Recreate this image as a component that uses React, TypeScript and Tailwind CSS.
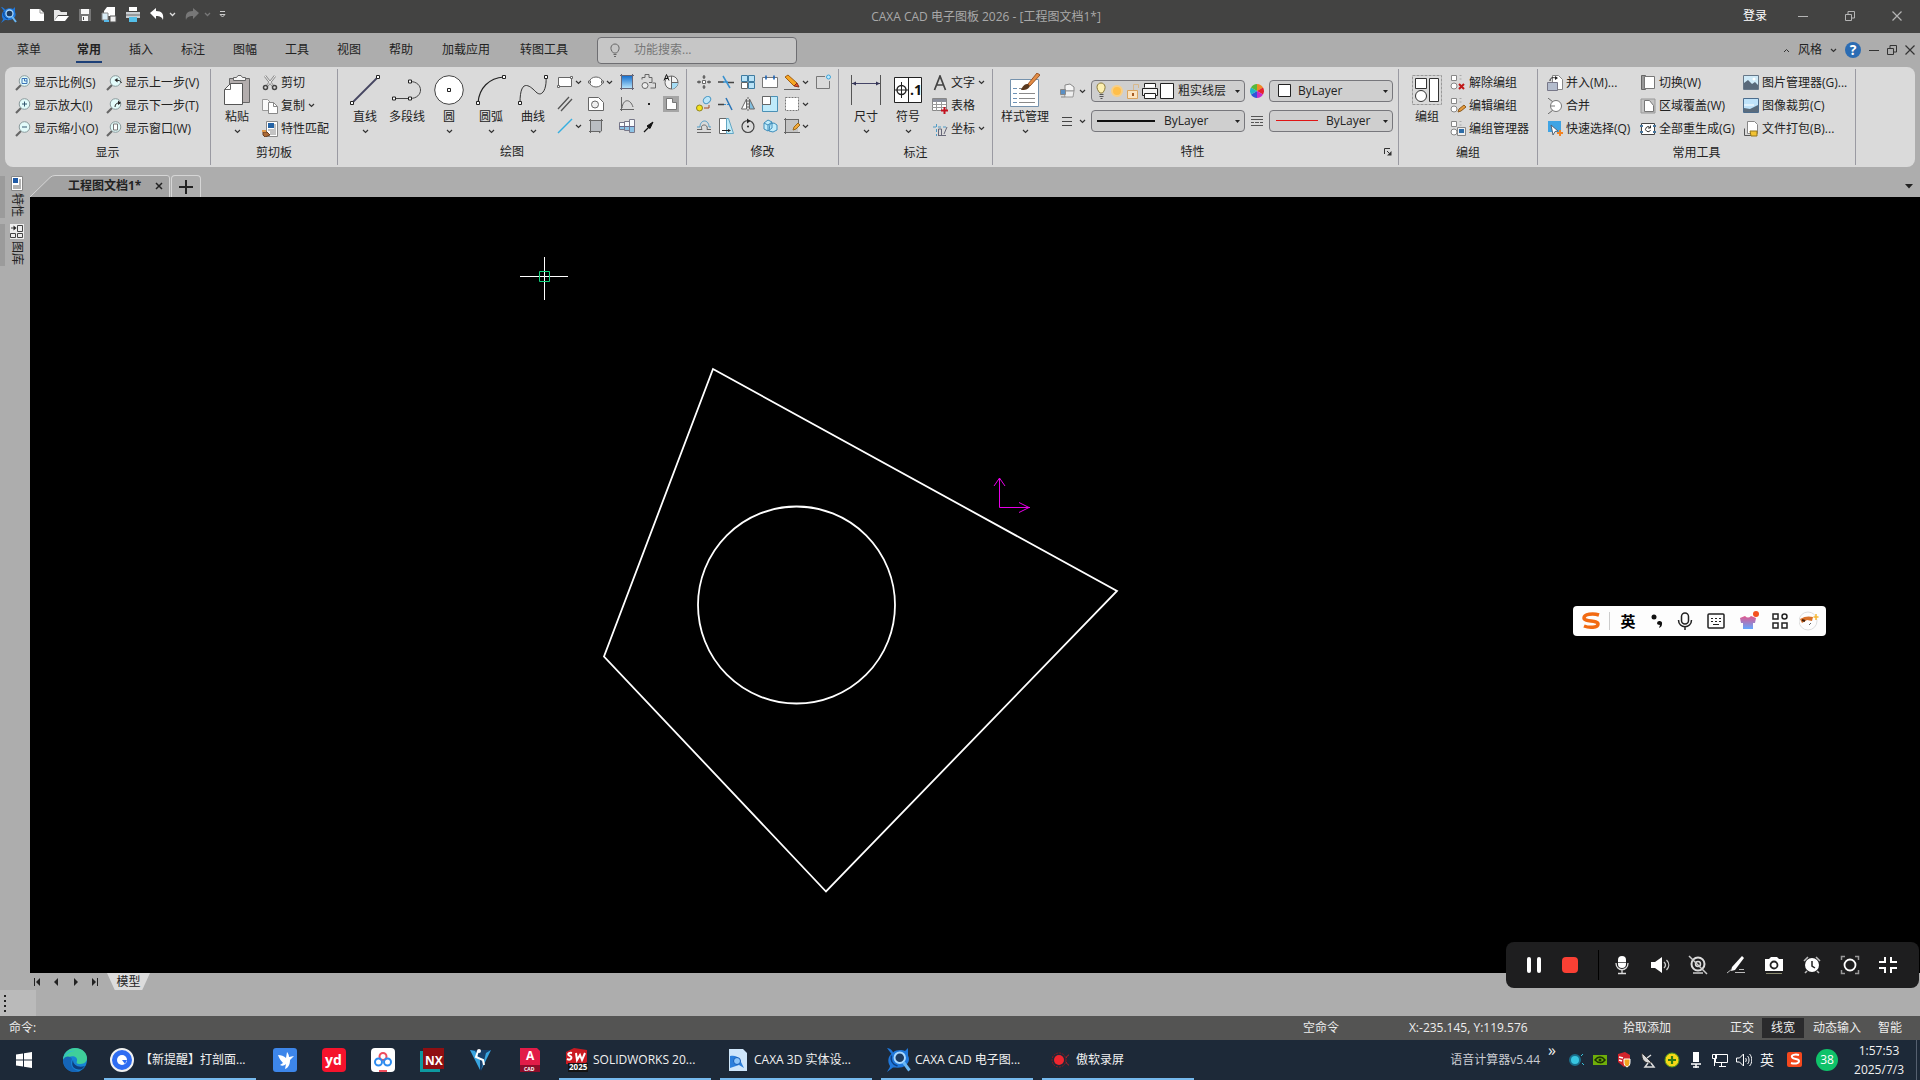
import { ReactNode } from 'react';
import clsx from 'clsx';

interface SvgProps {
  w?: number;
  h?: number;
  box?: string;
  children: ReactNode;
}

// Icons are drawn on a 16x16 grid unless told otherwise
function Svg({ w = 16, h = 16, box, children }: SvgProps) {
  return (
    <svg className="shrink-0" width={w} height={h} viewBox={box ?? `0 0 ${w} ${h}`} fill="none" stroke="#666" strokeWidth={1}>
      {children}
    </svg>
  );
}

const Chevron = () => (
  <Svg w={7} h={5}>
    <path d="M1 1l2.5 2.5L6 1" stroke="#333" strokeWidth={1.2} />
  </Svg>
);

const Caret = () => (
  <Svg w={5} h={3}>
    <path d="M0 0h5L2.5 3z" fill="#222" stroke="none" />
  </Svg>
);

/* ---------- display group ---------- */

function Magnifier({ children }: { children?: ReactNode }) {
  return (
    <Svg>
      <path d="M1 15l5-5" stroke="#666" strokeWidth={2.2} />
      <circle cx="9.5" cy="6" r="5.3" fill="#e2fbfa" stroke="#8a9a9c" />
      {children}
    </Svg>
  );
}

const zoomIcons = {
  scale: <Magnifier><path d="M7 3.5h5v5H7zM9.5 3.5v2.5H12" stroke="#3d74b8" /></Magnifier>,
  zoomIn: <Magnifier><path d="M7 6h5M9.5 3.5v5" stroke="#33566e" /></Magnifier>,
  zoomOut: <Magnifier><path d="M7 6h5" stroke="#33566e" /></Magnifier>,
  prev: <Magnifier><path d="M15.5 8c-1-2.5-3-3-5-2.5" stroke="#222" /><path d="M11.5 3v4.500L8.500 5z" fill="#222" stroke="none" /></Magnifier>,
  next: <Magnifier><path d="M9 9c0-3 2-4.500 5-4" stroke="#222" /><path d="M12 2.500v4.500l3-2z" fill="#222" stroke="none" /></Magnifier>,
  window: <Magnifier><path d="M7.5 3h4v6h-4z" fill="#fff" stroke="#777" /></Magnifier>,
};

/* ---------- clipboard group ---------- */

const PasteIcon = () => (
  <Svg w={30} h={30}>
    <path d="M7.5 3.5h20v24h-20z" fill="#b3adad" stroke="#666" />
    <path d="M11.5 5.5v-3h3L16 .5h3l1.500 2h3v3z" fill="#f5f5f5" />
    <path d="M8.5 8.5h12v21h-18v-15z" fill="#fff" stroke="#555" />
    <path d="M2.5 14.5h6v-6" />
  </Svg>
);

const CutIcon = () => (
  <Svg>
    <path d="M3 1l8 10M13 1L5 11" stroke="#888" strokeWidth={2.5} />
    <path d="M3 1l8 10M13 1L5 11" stroke="#f4f4f4" />
    <circle cx="3.5" cy="12.5" r="2" stroke="#444" strokeWidth={1.5} />
    <circle cx="12.5" cy="12.5" r="2" stroke="#444" strokeWidth={1.5} />
  </Svg>
);

const CopyIcon = () => (
  <Svg>
    <path d="M.5 1.5h5l3 3v8h-8z" fill="#fafafa" stroke="#999" />
    <path d="M6.5 4.5h5l4 4v7h-9z" fill="#fff" stroke="#888" />
    <path d="M11.5 4.5v4h4" stroke="#888" />
  </Svg>
);

const MatchIcon = () => (
  <Svg>
    <path d="M4.5.5h11v15h-11z" fill="#fff" stroke="#888" />
    <path d="M6 2h6v5H6z" fill="#2463a5" stroke="none" />
    <path d="M13 3v9M6 9h6M8 11h4M8 13h6" stroke="#888" />
    <path d="M1 11h4l3 3-5 2-2-2z" fill="#ab6a37" stroke="#6b3d1c" />
    <path d="M0 10h4" stroke="#e29a4a" strokeWidth={2} />
  </Svg>
);

/* ---------- draw group ---------- */

const Node = ({ x, y }: { x: number; y: number }) => (
  <path d={`M${x - 1.5} ${y - 1.5}h3v3h-3z`} fill="#fff" stroke="#222" />
);

// smaller grip used on the 16px icons
const Grip = ({ x, y }: { x: number; y: number }) => (
  <path d={`M${x - 1} ${y - 1}h2v2h-2z`} fill="#fff" stroke="#666" />
);

const drawBig = {
  line: <Svg w={30} h={30}><path d="M2 28L28 2" stroke="#454560" strokeWidth={1.8} /><Node x={2} y={28} /><Node x={28} y={2} /></Svg>,
  poly: <Svg w={30} h={30}><path d="M2 23.5h17M18 6.5c14 0 14 17 0 17" stroke="#444" /><Node x={2} y={23.5} /><Node x={18} y={23.5} /><Node x={18} y={6.5} /></Svg>,
  circle: <Svg w={30} h={30}><circle cx="15" cy="15" r="14.3" fill="#fff" stroke="#444" /><Node x={15} y={15} /></Svg>,
  arc: <Svg w={30} h={30}><path d="M2 28C3 13 13 3 28 2" stroke="#222" strokeWidth={1.2} /><Node x={2} y={28} /><Node x={28} y={2} /></Svg>,
  curve: <Svg w={30} h={30}><path d="M2 28C2 0 14 13 18 17C24 23 29 14 28 2" stroke="#333" /><Node x={2} y={28} /><Node x={28} y={2} /></Svg>,
};

interface Tool {
  name: string;
  menu?: boolean;
  icon?: ReactNode;
}

const drawTools: Tool[] = [
  { name: '矩形', menu: true, icon: <Svg><path d="M1.5 3.5h13v9h-13z" fill="#fff" /><Grip x={1.5} y={12.5} /><Grip x={14.5} y={3.5} /></Svg> },
  { name: '椭圆', menu: true, icon: <Svg><ellipse cx="8" cy="8" rx="6.5" ry="5" fill="#fff" /><Grip x={1.5} y={8} /><Grip x={14.5} y={8} /></Svg> },
  {
    name: '填充',
    icon: (
      <Svg>
        <defs>
          <linearGradient id="fill" x1="0" y1="0" x2="0" y2="1">
            <stop offset="0" stopColor="#1670ce" />
            <stop offset="1" stopColor="#b4e2fa" />
          </linearGradient>
        </defs>
        <path d="M3 2h10v12H3z" fill="url(#fill)" stroke="none" />
        <path d="M1 1.5h14M1 14.5h14M2.5 0v16M13.5 0v16" stroke="#667" />
      </Svg>
    ),
  },
  { name: '块', icon: <Svg><path d="M1 5.5V3.5h3v-3h4v3h3v5h-3M11.5 9h3v5h-5" /><circle cx="4" cy="11.5" r="3" fill="#eee" /></Svg> },
  { name: '放大图', icon: <Svg><circle cx="8.500" cy="8.5" r="6.5" fill="#f2f2f2" /><path d="M8.5 8.5H15a6.5 6.5 0 01-6.5 6.5z" fill="#a6ddf5" stroke="none" /><path d="M1 6.5L3.5.5 6 6.5M2 4.5h3" stroke="#111" /><path d="M8.5 2v13M8.500 8.5H15" /></Svg> },
  { name: '平行线', icon: <Svg><path d="M1 13L12 1M4 15L15 3" stroke="#555" strokeWidth={1.3} /></Svg> },
  { name: '孔', icon: <Svg><path d="M.5 1.5h10l5 5v8H.5z" fill="#fff" /><circle cx="7" cy="8.5" r="3.5" fill="#eee" /></Svg> },
  { name: '公式曲线', icon: <Svg><path d="M2.5 1v14M1 13.5h14M3 12C4 3 11 2 14 11" /></Svg> },
  { name: '点', icon: <Svg><path d="M7 7h2v2H7z" fill="#222" stroke="none" /></Svg> },
  { name: '轮廓', icon: <Svg><path d="M0 0h16v16H0z" fill="#a5a5a5" stroke="none" /><path d="M3.5 2.5h6v4h4v7h-10z" fill="#fff" stroke="#777" /></Svg> },
  { name: '构造线', menu: true, icon: <Svg><path d="M1 15L15 1" stroke="#35aee0" strokeWidth={1.5} /></Svg> },
  { name: '局部剖', icon: <Svg><path d="M3 3h10v10H3z" fill="#b9bdc2" stroke="none" /><path d="M1 2.5h14M2.5 1v14M13.5 1v12L11 15M1 13.5h11" /></Svg> },
  { name: '孔轴', icon: <Svg><path d="M.5 4.5h5v7h-5zM5.500 3.5h5v9h-5zM10.5 1.5h5v13h-5z" fill="#f8fafc" stroke="#778" /><path d="M1 9h4v2H1zM6 9h4v3H6zM11 9h4v5h-4z" fill="#8dc3e6" stroke="none" /><path d="M0 8.500h16" stroke="#668" /></Svg> },
  { name: '箭头', icon: <Svg><path d="M3 14l5-5" stroke="#111" strokeWidth={1.2} /><path d="M12 4L6 8l3 2.5z" fill="#111" stroke="#111" /></Svg> },
];

/* ---------- modify group ---------- */

const modifyTools: Tool[] = [
  { name: '平移', icon: <Svg><path d="M8 1v4M8 11v4M1 8h4M11 8h4" strokeWidth={1.4} /><path d="M6.5 3h3M6.5 13h3M3 6.500v3M13 6.5v3" stroke="#444" /><path d="M6.5 6.5h3v3h-3z" fill="#fff" /></Svg> },
  { name: '裁剪', icon: <Svg><path d="M0 8h6M10 8.5h6" stroke="#444" strokeWidth={1.4} /><path d="M5 2l7 12M5 8h5" stroke="#3b92cf" strokeWidth={1.5} /></Svg> },
  { name: '阵列', icon: <Svg><path d="M1.5 1.5h6v6h-6zM8.5 1.5h6v6h-6zM8.5 8.5h6v6h-6z" fill="#b9e2f6" stroke="#3f7ba0" /><path d="M1.5 8.5h6v6h-6z" fill="#fff" /></Svg> },
  { name: '打断', icon: <Svg><path d="M.5 3.5h15v10H.5z" fill="#fff" stroke="#777" /><path d="M4 1.500v4M12 1.5v4" stroke="#1d64b4" strokeWidth={1.600} /></Svg> },
  { name: '删除', menu: true, icon: <Svg><path d="M1 3l3-2 9 8-3 3z" fill="#f6a623" stroke="#a35e12" /><path d="M10 12l3-3 2 4z" fill="#e8552d" stroke="#8c3318" /><path d="M0 15.5h16" stroke="#666" /></Svg> },
  { name: '圆角', icon: <Svg><path d="M10 2.5H1.5v12h13V7" stroke="#777" /><circle cx="13.5" cy="3" r="2" fill="#bfeaff" stroke="#3fa3d8" /></Svg> },
  { name: '平移复制', icon: <Svg><ellipse cx="11" cy="4" rx="4" ry="3" fill="#bde6f8" stroke="#4f9bc6" transform="rotate(-40 11 4)" /><circle cx="3.5" cy="12" r="3" fill="#f5e21a" stroke="#8f8420" /><path d="M8 12h5V9" stroke="#a34a22" /></Svg> },
  { name: '延伸', icon: <Svg><path d="M0 8.5h6" stroke="#444" strokeWidth={1.4} /><path d="M6 8.5h6" stroke="#3b92cf" strokeDasharray="2 1" /><path d="M8 2l6 12" stroke="#2c75b6" strokeWidth={1.5} /></Svg> },
  { name: '镜像', icon: <Svg><path d="M6.5 3v10h-5z" fill="#fff" /><path d="M9.5 3v10h5z" fill="#82bfe0" /><path d="M8 1v14" strokeDasharray="2 1" /></Svg> },
  { name: '缩放', icon: <Svg><path d="M.5.5h15v15H.5z" fill="#bfeafa" stroke="#4b90b5" /><path d="M.5.5h8v8h-8z" fill="#fff" /></Svg> },
  { name: '分解', menu: true, icon: <Svg><path d="M1.5 1.5h13v13h-13z" fill="#fff" stroke="#777" strokeDasharray="2 1" /></Svg> },
  { name: '' },
  { name: '等距线', icon: <Svg><path d="M1 14.5h14M1 11.5h5c-3-6 7-6 5 0h4" /><path d="M1 9h3c0-8 9-8 9 0h2" stroke="#4f9bc6" /></Svg> },
  { name: '拉伸', icon: <Svg><path d="M1.5.5h7v15h-7z" fill="#fff" /><path d="M8.5.5h2l5 15h-7z" fill="#c2ecf8" stroke="#62a6c4" /><path d="M4 12.5h7" stroke="#222" /><path d="M10 11l3 1.500-3 1.5z" fill="#222" stroke="none" /></Svg> },
  { name: '旋转', icon: <Svg><circle cx="8" cy="8.500" r="6" stroke="#444" strokeWidth={1.2} /><path d="M7 .5l3.500 2.5L7 5.5z" fill="#222" stroke="none" /><circle cx="8" cy="8.5" r="1" fill="#222" stroke="none" /></Svg> },
  { name: '三维旋转', icon: <Svg><path d="M2 5l4-3 4 2v6l-4 3-4-2zM8 6l4-1 3 2v5l-4 2-4-1z" fill="#c2ecfb" stroke="#3f8ebb" /><path d="M2 5l4 2 4-3M6 7v6" stroke="#3f8ebb" /></Svg> },
  { name: '编辑', menu: true, icon: <Svg><path d="M2 2h12v12H2z" fill="#c4c4c4" stroke="none" /><path d="M0 1.5h14M1.5 0v16M0 14.5h16M14.5 1v5" /><path d="M9 12l1-3 4-4 2 2-4 4z" fill="#f2a93b" stroke="#9c6a18" /></Svg> },
];

/* ---------- annotate / properties ---------- */

const DimIcon = () => (
  <Svg w={30} h={30}>
    <path d="M.5 0v30M29.5 0v30" stroke="#555" />
    <path d="M1 8.5h28" stroke="#446" />
    <path d="M1 8.5l4-2v4zM29 8.5l-4-2v4z" fill="#335" stroke="none" />
  </Svg>
);

const SymbolIcon = () => (
  <Svg w={28} h={26}>
    <path d="M.5.5h27v25H.5z" fill="#fff" stroke="#222" />
    <path d="M14.5 0v26M1 13h13M7.5 5v16" stroke="#222" />
    <circle cx="7.5" cy="13" r="4.5" stroke="#222" strokeWidth={1.4} />
    <text x="16" y="18" fill="#111" stroke="none" className="text-sm font-bold">.1</text>
  </Svg>
);

const TextIcon = () => (
  <Svg>
    <path d="M2.5 15L8 1l5.5 14M4.5 10h7" stroke="#444" strokeWidth={1.7} />
  </Svg>
);

const TableIcon = () => (
  <Svg>
    <path d="M.5.5h14v12H.5z" fill="#fff" stroke="#888" />
    <path d="M1 1h13v3H1z" fill="#8b8f9c" stroke="none" />
    <path d="M0 6.5h14M0 9.5h14M4.5 3v10M9.5 3v10" stroke="#999" />
    <path d="M12.5 9v7M9 12.5h7" stroke="#c1121f" strokeWidth={2} />
  </Svg>
);

const CoordIcon = () => (
  <Svg>
    <path d="M1 6h14M4.5 3v12" stroke="#4f9bc6" strokeDasharray="3 2" />
    <path d="M6 14.5h8M6.5 14V8h3v6M12 13L15 6" stroke="#667" />
  </Svg>
);

const StyleIcon = () => (
  <Svg w={30} h={34}>
    <path d="M.5 6.5h28v27H.5z" fill="#fff" stroke="#7592ad" />
    <path d="M3 15.5h4M3 20.5h4M3 25.5h4M3 29.5h4" stroke="#6d91b5" />
    <path d="M9 15.5h5M9 20.5h16M9 25.5h16M9 29.5h16" stroke="#8a8a8a" />
    <path d="M11 17c2-5 4-6 7-6l2 2c-2 4-5 4-9 4z" fill="#5b3a20" stroke="none" />
    <path d="M18 11L27 0l3 2-10 11z" fill="#e38d45" stroke="#99562a" />
  </Svg>
);

const LayerIcon = () => (
  <Svg>
    <path d="M6 2l5-1 4 3v4H6z" fill="#f4f4f4" stroke="#888" />
    <path d="M5 8h10l-1 6H6z" fill="#eee" stroke="#999" />
    <path d="M1.5 6.5h5v5h-5z" fill="#5a8fc4" stroke="#888" />
    <path d="M2 14h4" stroke="#888" />
  </Svg>
);

const LinesIcon = () => (
  <Svg>
    <path d="M3 4.5h10M3 8.5h10M3 12.5h10" stroke="#444" />
  </Svg>
);

const WeightIcon = () => (
  <Svg w={14} h={14}>
    <path d="M1 2.5h12M1 5.5h12M1 8.5h3M5 8.5h4M10 8.5h3M1 11.5h12" stroke="#555" />
  </Svg>
);

const WheelIcon = () => (
  <Svg w={14} h={14}>
    <g stroke="none">
      <path d="M7 7V0a7 7 0 016 3.5z" fill="#f08a24" />
      <path d="M7 7l6-3.5a7 7 0 010 7z" fill="#e5232e" />
      <path d="M7 7l6 3.5A7 7 0 017 14z" fill="#c52bc9" />
      <path d="M7 7v7a7 7 0 01-6-3.5z" fill="#2f55d8" />
      <path d="M7 7l-6 3.5a7 7 0 010-7z" fill="#1fb6c9" />
      <path d="M7 7L1 3.5A7 7 0 017 0z" fill="#59b83a" />
    </g>
  </Svg>
);

const LayerStateIcons = () => (
  <Svg w={78} h={18}>
    <path d="M4 11C-1 6 1 1 5 1s6 5 1.5 10z" fill="#fdf0b0" stroke="#8b7b3a" />
    <path d="M3.5 12.5h4M3.5 14.5h4M4.5 16.5h2" stroke="#555" />
    <circle cx="21" cy="9" r="5" fill="#ffbf4a" stroke="#f8cf85" strokeWidth={2} />
    <path d="M31.5 8.5h10v8h-10z" fill="#fbe3bf" stroke="#d8a35e" />
    <path d="M37.5 8V2.5h5V6" stroke="#d8b98c" />
    <path d="M36 11h2v3h-2z" fill="#a55b23" stroke="none" />
    <path d="M48.5 5.5v-4h11v4" fill="#fff" stroke="#222" />
    <path d="M46.5 6.5h15v7h-15z" fill="#f4f4f4" stroke="#222" />
    <path d="M48.5 11.5h11v5h-11z" fill="#fff" stroke="#222" />
    <path d="M64.5 1.5h13v15h-13z" fill="#fff" stroke="#222" />
  </Svg>
);

/* ---------- group / common tools ---------- */

const GroupIcon = () => (
  <Svg w={30} h={30}>
    <path d="M.5.5h29v29H.5z" stroke="#999" strokeDasharray="3 1" />
    <path d="M3.5 3.5h11v10h-11zM17.5 3.5h9v23h-9z" fill="#fff" stroke="#333" />
    <circle cx="9" cy="21" r="5.5" fill="#fff" stroke="#333" />
  </Svg>
);

function GroupSmall({ children }: { children: ReactNode }) {
  return (
    <Svg>
      <path d="M1.5.5h5v5h-5z" fill="#fff" stroke="#888" />
      <circle cx="4" cy="11" r="3" fill="#fff" stroke="#888" />
      <path d="M9.5.5h2M9.5 4h2" stroke="#aaa" />
      {children}
    </Svg>
  );
}

const groupItems = [
  { name: '解除编组', icon: <GroupSmall><path d="M9 9l5 5M14 9l-5 5" stroke="#c01818" strokeWidth={2} /></GroupSmall> },
  { name: '编辑编组', icon: <GroupSmall><path d="M8 14l1-3 5-4 2 2-5 4z" fill="#e59a3c" stroke="#8d5a1d" /></GroupSmall> },
  { name: '编组管理器', icon: <GroupSmall><path d="M7.5 6.5h8v8h-8z" fill="#eee" stroke="#888" /><path d="M9 8h5v4H9z" fill="#2e6da8" stroke="none" /></GroupSmall> },
];

const commonItems = [
  { name: '并入(M)...', icon: <Svg><path d="M5.5.5h6l4 4v10h-10z" fill="#fff" stroke="#888" /><path d="M.5 7.5h10v8H.5z" fill="#b3bccd" stroke="#778" /><path d="M3 6c0-3 2-4 6-3" stroke="#222" /><path d="M8 1l3 2-3 2z" fill="#222" stroke="none" /></Svg> },
  { name: '切换(W)', icon: <Svg><path d="M1.5.5h4v14h-4z" fill="#999" stroke="#666" /><path d="M4.5 1.5h10v12h-10z" fill="#fff" stroke="#777" /></Svg> },
  { name: '图片管理器(G)...', icon: <Svg><path d="M.5.5h15v14H.5z" fill="#cfeaf8" stroke="#678" /><path d="M1 14V8l4-3 4 4 3-2 3 3v4z" fill="#59697a" stroke="none" /><circle cx="11" cy="4" r="1.5" fill="#fff" stroke="none" /></Svg> },
  { name: '合并', icon: <Svg><path d="M1 0l5 4M1 16l5-4" /><circle cx="9" cy="8" r="5.5" fill="#fff" stroke="#777" /><path d="M4 8h4" stroke="#777" /></Svg> },
  { name: '区域覆盖(W)', icon: <Svg><path d="M1 1h14v14H1z" fill="#c4c4c4" stroke="#999" /><path d="M4.5 2.5h5l4 5v6h-9z" fill="#fff" stroke="#777" /></Svg> },
  { name: '图像裁剪(C)', icon: <Svg><path d="M.5.5h15v14H.5z" fill="#bfe3fa" stroke="#4c6c8c" /><path d="M1 14v-4l6 1 8-4v7z" fill="#5a6b7c" stroke="none" /><path d="M1 7h10" stroke="#fff" /></Svg> },
  { name: '快速选择(Q)', icon: <Svg><path d="M1 0h13v11H1z" fill="#3fa4e4" stroke="none" /><path d="M4 4l7 6-3 .5L6 14z" fill="#fff" stroke="#567" /><path d="M13 9v6M10 12h6" stroke="#f28322" strokeWidth={2} /></Svg> },
  { name: '全部重生成(G)', icon: <Svg><path d="M1.5 2.5h13v11h-13z" fill="#fff" stroke="#444" /><path d="M0 5h3M0 11h3M13 5h3M13 11h3" stroke="#47759c" strokeWidth={2} /><path d="M10 6.500a2.500 2.500 0 10.5 2.500M10.5 4.500v2.500H8" stroke="#333" /></Svg> },
  { name: '文件打包(B)...', icon: <Svg><path d="M4.5.5h7l3 3v9h-10z" fill="#fff" stroke="#888" /><path d="M1.5 7.5v7h7" stroke="#555" /><path d="M7 10h7v5H8z" fill="#f1c232" stroke="#93751c" /></Svg> },
];

/* ---------- ribbon pieces ---------- */

function Group({ title, className, children }: { title: string; className?: string; children: ReactNode }) {
  return (
    <section className={clsx('my-0.5 flex shrink-0 flex-col border-r border-[#9a9aa2] pt-0.5', className)}>
      <div className="flex h-[69px]">{children}</div>
      <h2 className="text-center leading-[26px]">{title}</h2>
    </section>
  );
}

function BigButton({ icon, label, menu = true, wide }: { icon: ReactNode; label: string; menu?: boolean; wide?: boolean }) {
  return (
    <button className={clsx('flex flex-col items-center', wide ? 'w-[52px]' : 'w-[42px]')}>
      <span className="flex h-[38px] items-center">{icon}</span>
      <span className="leading-4 whitespace-nowrap">{label}</span>
      <span className="flex h-3 items-center">{menu && <Chevron />}</span>
    </button>
  );
}

function SmallButton({ icon, label, menu }: { icon: ReactNode; label: string; menu?: boolean }) {
  return (
    <button className="flex h-[23px] items-center gap-[3px] whitespace-nowrap">
      {icon}
      {label}
      {menu && <Chevron />}
    </button>
  );
}

function ToolGrid({ tools, className }: { tools: Tool[]; className: string }) {
  return (
    <div className={clsx('grid auto-rows-[22px]', className)}>
      {tools.map((tool, i) =>
        tool.icon ? (
          <button key={i} aria-label={tool.name} className="flex items-center gap-[2px]">
            {tool.icon}
            {tool.menu && <Chevron />}
          </button>
        ) : (
          <span key={i} />
        )
      )}
    </div>
  );
}

function Combo({ label, value, icon, className }: { label: string; value: string; icon: ReactNode; className: string }) {
  return (
    <div className={clsx('flex h-[22px] items-center gap-1 rounded border border-[#77777c] bg-[#cfcfcf] px-1', className)}>
      {icon}
      <select aria-label={label} className="min-w-0 flex-1 appearance-none bg-transparent outline-none">
        <option>{value}</option>
      </select>
      <Caret />
    </div>
  );
}

function Ribbon() {
  return (
    <div className="mx-[5px] flex h-[100px] overflow-hidden rounded-lg bg-[#dadada]">
      <Group title="显示" className="w-[206px]">
        <div className="grid grid-cols-[91px_auto] content-start pl-2.5">
          <SmallButton icon={zoomIcons.scale} label="显示比例(S)" />
          <SmallButton icon={zoomIcons.prev} label="显示上一步(V)" />
          <SmallButton icon={zoomIcons.zoomIn} label="显示放大(I)" />
          <SmallButton icon={zoomIcons.next} label="显示下一步(T)" />
          <SmallButton icon={zoomIcons.zoomOut} label="显示缩小(O)" />
          <SmallButton icon={zoomIcons.window} label="显示窗口(W)" />
        </div>
      </Group>

      <Group title="剪切板" className="w-[127px]">
        <div className="flex gap-1 pl-[5px]">
          <BigButton icon={<PasteIcon />} label="粘贴" />
          <div>
            <SmallButton icon={<CutIcon />} label="剪切" />
            <SmallButton icon={<CopyIcon />} label="复制" menu />
            <SmallButton icon={<MatchIcon />} label="特性匹配" />
          </div>
        </div>
      </Group>

      <Group title="绘图" className="w-[349px]">
        <div className="flex pl-1.5">
          <BigButton icon={drawBig.line} label="直线" />
          <BigButton icon={drawBig.poly} label="多段线" menu={false} />
          <BigButton icon={drawBig.circle} label="圆" />
          <BigButton icon={drawBig.arc} label="圆弧" />
          <BigButton icon={drawBig.curve} label="曲线" />
          <ToolGrid tools={drawTools} className="ml-[3px] grid-cols-[31px_31px_22px_22px_22px]" />
        </div>
      </Group>

      <Group title="修改" className="w-[152px]">
        <ToolGrid tools={modifyTools} className="ml-[9px] grid-cols-[22px_22px_22px_22px_31px_16px]" />
      </Group>

      <Group title="标注" className="w-[154px]">
        <div className="flex pl-1.5">
          <BigButton icon={<DimIcon />} label="尺寸" />
          <BigButton icon={<SymbolIcon />} label="符号" />
          <div className="ml-[3px]">
            <SmallButton icon={<TextIcon />} label="文字" menu />
            <SmallButton icon={<TableIcon />} label="表格" />
            <SmallButton icon={<CoordIcon />} label="坐标" menu />
          </div>
        </div>
      </Group>

      <section className="my-0.5 flex w-[406px] shrink-0 flex-col border-r border-[#9a9aa2] pt-0.5">
        <div className="flex h-[69px] pl-1.5">
          <BigButton icon={<StyleIcon />} label="样式管理" wide />
          <div className="ml-2 flex flex-col gap-2 pt-[9px]">
            <div className="flex items-center gap-[5px]">
              <button aria-label="图层" className="flex w-[27px] items-center gap-1"><LayerIcon /><Chevron /></button>
              <Combo label="当前层" value="粗实线层" icon={<LayerStateIcons />} className="w-[154px]" />
              <WheelIcon />
              <Combo label="颜色" value="ByLayer" icon={<Svg w={20} h={14}><path d="M4.5.5h12v12h-12z" fill="#fff" stroke="#222" /></Svg>} className="w-[124px]" />
            </div>
            <div className="flex items-center gap-[5px]">
              <button aria-label="线型" className="flex w-[27px] items-center gap-1"><LinesIcon /><Chevron /></button>
              <Combo label="线型" value="ByLayer" icon={<Svg w={64} h={2}><path d="M1 1h58" stroke="#111" strokeWidth={2} /></Svg>} className="w-[154px]" />
              <WeightIcon />
              <Combo label="线宽" value="ByLayer" icon={<Svg w={48} h={2}><path d="M2 .5h42" stroke="#e01515" /></Svg>} className="w-[124px]" />
            </div>
          </div>
        </div>
        <div className="grid grid-cols-[1fr_auto_1fr] items-center pr-1.5">
          <h2 className="col-start-2 leading-[26px]">特性</h2>
          <button aria-label="特性设置" className="justify-self-end">
            <Svg w={8} h={8}><path d="M.5 6V.5H6M3 3l3 3" stroke="#333" /><path d="M7.5 3v4.5H3z" fill="#333" stroke="none" /></Svg>
          </button>
        </div>
      </section>

      <Group title="编组" className="w-[139px]">
        <div className="flex gap-0.5 pl-[7px]">
          <BigButton icon={<GroupIcon />} label="编组" menu={false} />
          <div>
            {groupItems.map((item) => (
              <SmallButton key={item.name} icon={item.icon} label={item.name} />
            ))}
          </div>
        </div>
      </Group>

      <Group title="常用工具" className="w-[318px]">
        <div className="grid grid-cols-[93px_103px_auto] content-start pl-[9px]">
          {commonItems.map((item) => (
            <SmallButton key={item.name} icon={item.icon} label={item.name} />
          ))}
        </div>
      </Group>
    </div>
  );
}

/* ---------- title and menu ---------- */

const quickTools = [
  { name: '新建', icon: <Svg><path d="M1 2h10l4 4v8H1z" fill="#fff" stroke="none" /><path d="M11 2v4h4" stroke="#999" /></Svg> },
  { name: '打开', icon: <Svg><path d="M1 3h5l2 2h6v3H5l-4 6z" fill="#e6e6e6" stroke="none" /><path d="M5 9h11l-4 5H1z" fill="#fff" stroke="none" /></Svg> },
  { name: '保存', icon: <Svg><path d="M2 2h12v12H2z" fill="#777" stroke="none" /><path d="M4 2h8v5H4zM5 9h6v5H5z" fill="#f8f8f8" stroke="none" /><path d="M6.5 10v3" stroke="#444" /></Svg> },
  { name: '另存为', icon: <Svg><path d="M6 0h8v9H3V4z" fill="#fff" stroke="none" /><path d="M1 6h6v7H1z" fill="#d8ecf6" stroke="#888" /><path d="M9 9h6v6H9z" fill="#eee" stroke="#555" /><path d="M3 14h5" stroke="#56b8e8" strokeWidth={2} /></Svg> },
  { name: '打印', icon: <Svg><path d="M4 0h8v4H4z" fill="#fff" stroke="none" /><path d="M1 5h14v6H1z" fill="#c9ced2" stroke="none" /><path d="M1 8h14" stroke="#666" /><path d="M4 10h8v5H4z" fill="#54bfe8" stroke="none" /></Svg> },
];

function CaxaLogo({ size }: { size: number }) {
  return (
    <Svg w={size} h={size} box="0 0 16 16">
      <path d="M0 0c2 0 4 2 4 3 2-2 6-2 8-1l2-2v5c1 2 1 4-1 6-3 3-7 2-9 2l-4 3c1-2 2-3 2-4C0 9 1 5 3 4z" fill="#1f78dc" stroke="none" />
      <circle cx="8.5" cy="6.5" r="3.500" fill="#1d3a5e" stroke="#a7d8ff" strokeWidth={1.300} />
      <path d="M11 9.500l4 5.500" stroke="#69b7f5" strokeWidth={2} />
      <path d="M3 5c-1 4 1 6 4 7" stroke="#0b3f85" />
    </Svg>
  );
}

const windowIcons = (color: string) => ({
  min: <Svg w={10} h={10}><path d="M0 5.5h10" stroke={color} /></Svg>,
  restore: <Svg w={10} h={10}><path d="M.5 3.5h6v6h-6zM3 3V.5h6.5V7H7" stroke={color} /></Svg>,
  close: <Svg w={10} h={10}><path d="M.5.5l9 9M9.5.5l-9 9" stroke={color} strokeWidth={1.2} /></Svg>,
});

function TitleBar() {
  const win = windowIcons('#b5b5b5');
  return (
    <header className="grid h-[33px] grid-cols-[1fr_auto_1fr] items-center bg-[#434342] pb-1 text-[#a9a9a9]">
      <div className="flex items-center gap-2 pl-px">
        <span className="mr-1"><CaxaLogo size={16} /></span>
        {quickTools.map((tool) => (
          <button key={tool.name} aria-label={tool.name}>{tool.icon}</button>
        ))}
        <button aria-label="撤销" className="flex items-center gap-1">
          <Svg><path d="M1 6l6-5v3c6 0 8 3 7 9-1-3-3-4-7-4v3z" fill="#fff" stroke="none" /></Svg>
          <Svg w={7} h={5}><path d="M1 1l2.5 2.5L6 1" stroke="#ddd" strokeWidth={1.3} /></Svg>
        </button>
        <button aria-label="重做" className="flex items-center gap-1">
          <Svg><path d="M15 6L9 1v3C3 4 1 7 2 13c1-3 3-4 7-4v3z" fill="#777" stroke="none" /></Svg>
          <Svg w={7} h={5}><path d="M1 1l2.5 2.5L6 1" stroke="#777" strokeWidth={1.3} /></Svg>
        </button>
        <button aria-label="自定义"><Svg w={7} h={7}><path d="M1 .5h5" stroke="#ccc" /><path d="M1 3.5h5L3.5 6z" stroke="#ccc" /></Svg></button>
      </div>
      <h1 className="pt-1 pl-[52px]">CAXA CAD 电子图板 2026 - [工程图文档1*]</h1>
      <div className="flex items-center justify-end pt-0.5">
        <button className="mr-3 text-white">登录</button>
        <button aria-label="最小化" className="flex w-[47px] justify-center">{win.min}</button>
        <button aria-label="还原" className="flex w-[47px] justify-center">{win.restore}</button>
        <button aria-label="关闭" className="flex w-[47px] justify-center">{win.close}</button>
      </div>
    </header>
  );
}

const menus = ['常用', '插入', '标注', '图幅', '工具', '视图', '帮助'];

function MenuBar() {
  const win = windowIcons('#333');
  return (
    <nav className="flex h-[34px] items-center">
      <button className="mr-2 ml-[3px] w-[52px]">菜单</button>
      {menus.map((m, i) => (
        <button key={m} className="flex h-full w-[52px] items-center justify-center">
          <span className={clsx('border-b-2 px-px pt-1 pb-[3px]', i === 0 ? 'border-[#1d3f77] font-bold' : 'border-transparent')}>{m}</span>
        </button>
      ))}
      <button className="w-[78px]">加载应用</button>
      <button className="w-[78px]">转图工具</button>
      <label className="ml-3.5 flex h-[27px] w-[200px] items-center gap-3.5 rounded border border-[#6e6e72] bg-[#c6c6c6] px-3">
        <Svg w={10} h={14}><path d="M3.5 10C-1 6 1 1 5 1s6 5 1.5 9zM3.5 11.5h3M4 13.5h2" stroke="#666" /></Svg>
        <input aria-label="功能搜索" placeholder="功能搜索..." className="min-w-0 flex-1 bg-transparent outline-none placeholder:text-[#777]" />
      </label>
      <div className="ml-auto flex items-center gap-2 pr-[5px]">
        <Svg w={7} h={5}><path d="M1 4l2.5-2.5L6 4" stroke="#333" /></Svg>
        <button className="flex items-center gap-2">风格<Chevron /></button>
        <button aria-label="帮助" className="flex h-4 w-4 items-center justify-center rounded-full bg-[#2b6cb3] text-sm font-bold text-white">?</button>
        <button aria-label="最小化文档">{win.min}</button>
        <button aria-label="还原文档">{win.restore}</button>
        <button aria-label="关闭文档">{win.close}</button>
      </div>
    </nav>
  );
}

function DocTabs() {
  return (
    <div className="flex h-[30px] items-end">
      <div className="relative ml-[30px] flex h-[22px] w-[140px] items-center pl-[38px] font-bold">
        <svg className="absolute inset-0" width="140" height="22" fill="#a2a2a2" stroke="#d6d6d6">
          <path d="M0 22L20 2.5Q22 .5 25 .5H137Q139.5 .5 139.5 3V22" />
        </svg>
        <button className="relative">工程图文档1*</button>
        <button aria-label="关闭标签" className="relative ml-auto pr-[7px]">
          <Svg w={8} h={8}><path d="M1 1l6 6M7 1L1 7" stroke="#222" strokeWidth={1.5} /></Svg>
        </button>
      </div>
      <button aria-label="新建标签" className="ml-px flex h-[22px] w-[30px] items-center justify-center rounded-t-sm border border-b-0 border-[#d6d6d6]">
        <Svg w={14} h={14}><path d="M7 0v14M0 7h14" stroke="#222" strokeWidth={2} /></Svg>
      </button>
      <button aria-label="标签列表" className="mr-[7px] mb-2 ml-auto">
        <Svg w={8} h={5}><path d="M0 0h8L4 4.5z" fill="#222" stroke="none" /></Svg>
      </button>
    </div>
  );
}

/* ---------- work area ---------- */

function SideTabs() {
  return (
    <aside className="-mt-[21px] flex w-[30px] shrink-0 flex-col gap-1.5">
      <button className="flex h-[42px] w-7 flex-col items-center gap-0.5 border-l-[5px] border-[#9b9b9b]">
        <Svg w={12} h={15}><path d="M.5.5h11v14H.5z" fill="#fff" stroke="#888" /><path d="M2 2h5v5H2z" fill="#1f5aa6" stroke="none" /><path d="M9 3v8M2 10h6M2 12h8" /></Svg>
        <span className="leading-4 [writing-mode:vertical-rl] [text-orientation:sideways]">特性</span>
      </button>
      <button className="flex h-[42px] w-7 flex-col items-center gap-0.5 border-l-[5px] border-[#9b9b9b]">
        <Svg w={14} h={15}><path d="M0 0h14v15H0z" fill="#eee" stroke="none" /><path d="M7.5 1.5h5v6h-5zM.5 9.5h5v4h-5zM7.5 9.5h5v4h-5zM1 4h4" stroke="#444" /><path d="M3.500 1.500l3 2.500-3 2.500z" fill="#222" stroke="none" /></Svg>
        <span className="leading-4 [writing-mode:vertical-rl] [text-orientation:sideways]">图库</span>
      </button>
    </aside>
  );
}

function Drawing() {
  return (
    <div className="min-w-0 flex-1 bg-black">
      <svg width="100%" height="100%" fill="none" stroke="#fff" strokeWidth={1.8}>
        <path d="M683 172L1087 394L796 694.500L574 459.500Z" />
        <circle cx="766.5" cy="408" r="98.5" />
        <g strokeWidth={1}>
          <path d="M490 79.5h48M514.5 60v43" />
          <path d="M509.5 74.5h10v10h-10z" stroke="#12d47e" />
          <path d="M969.5 281v29.5H1000M964 289l5.5-8 5.5 8M989 305.5l10 5-10 5" stroke="#e800e8" />
        </g>
      </svg>
    </div>
  );
}

function ModelTabs() {
  return (
    <div className="flex h-[17px] items-center pl-[33px]">
      <button aria-label="第一个" className="w-[19px]"><Svg w={8} h={8}><path d="M1.5 0v8" stroke="#222" /><path d="M7 0v8L3 4z" fill="#222" stroke="none" /></Svg></button>
      <button aria-label="上一个" className="w-[19px]"><Svg w={8} h={8}><path d="M6 0v8L2 4z" fill="#222" stroke="none" /></Svg></button>
      <button aria-label="下一个" className="w-[19px]"><Svg w={8} h={8}><path d="M3 0v8l4-4z" fill="#222" stroke="none" /></Svg></button>
      <button aria-label="最后一个" className="w-[17px]"><Svg w={8} h={8}><path d="M7.5 0v8" stroke="#222" /><path d="M2 0v8l4-4z" fill="#222" stroke="none" /></Svg></button>
      <button className="h-full w-[43px] bg-[#dcdcdc] leading-4 [clip-path:polygon(0_0,100%_0,82%_100%,18%_100%)]">模型</button>
    </div>
  );
}

function StatusBar() {
  return (
    <footer className="flex h-6 items-center bg-[#545453] pr-[18px] pl-[9px] text-[#ededed]">
      <span className="flex-1">命令:</span>
      <span className="mr-[70px]">空命令</span>
      <span className="mr-[90px] w-[124px]">X:-235.145, Y:119.576</span>
      <span className="mr-[59px]">拾取添加</span>
      <button>正交</button>
      <button className="mr-[9px] ml-2 h-5 w-[42px] bg-[#2a2a2c]">线宽</button>
      <button>动态输入</button>
      <button className="ml-[17px]">智能</button>
    </footer>
  );
}

/* ---------- windows taskbar ---------- */

const pinned = [
  { name: '飞书', icon: <Svg w={24} h={24}><rect width="24" height="24" rx="3" fill="#3d86ea" stroke="none" /><path d="M5 7c3 0 6 1 8 3l1-6c1 1 2 3 2 5l5-1-4 4c0 5-2 8-5 9l1-5c-2 2-4 2-6 1l3-2c-2-2-4-5-5-8z" fill="#fff" stroke="none" /></Svg> },
  { name: '有道', icon: <Svg w={24} h={24}><rect width="24" height="24" rx="4" fill="#f5132c" stroke="none" /><text x="3" y="17" fill="#fff" stroke="none" className="text-sm font-bold">yd</text></Svg> },
  { name: '百度网盘', icon: <Svg w={24} h={24}><rect width="24" height="24" rx="4" fill="#fff" stroke="none" /><circle cx="12" cy="8.5" r="3.5" stroke="#ef4d5d" strokeWidth={2} /><circle cx="7.5" cy="14" r="3.5" stroke="#2d8cf0" strokeWidth={2} /><circle cx="16.5" cy="14" r="3.5" stroke="#2d8cf0" strokeWidth={2} /><path d="M8 23h8" stroke="#ef4d5d" strokeWidth={2} /></Svg> },
  { name: 'NX', icon: <Svg w={24} h={24}><path d="M0 3h4v17h16v4H0z" fill="#0d9aa0" stroke="none" /><path d="M3 0h21v21H3z" fill="#8f0f12" stroke="none" /><text x="5" y="17" fill="#fff" stroke="none" className="text-xs font-bold">NX</text></Svg> },
  { name: 'Mastercam', icon: <Svg w={24} h={24}><path d="M1 2h21L12 23z" fill="#17406b" stroke="none" /><path d="M1 2l10 20V12L6 3zM22 2L12 22l3-9 2-8z" fill="#39a5e0" stroke="none" /><path d="M9 3l-2 6 7 3 1 5" stroke="#fff" strokeWidth={2} /><circle cx="10" cy="3" r="2" fill="#fff" stroke="none" /></Svg> },
  { name: 'AutoCAD', icon: <Svg w={24} h={24}><path d="M2 0h17l3 3v14H2z" fill="#e21c48" stroke="none" /><path d="M2 17h20v7H2z" fill="#8d0d2a" stroke="none" /><text x="8" y="12" fill="#fff" stroke="none" fontSize="12" fontWeight="bold">A</text><text x="6" y="23" fill="#fff" stroke="none" fontSize="5" fontWeight="bold">CAD</text></Svg> },
];

const running = [
  { name: 'SOLIDWORKS 20...', icon: <Svg w={24} h={24}><path d="M1 4l8-4 13 2v12l-6 4-15-2z" fill="#cb1a22" stroke="none" /><path d="M7 5c-4-1-5 2-2 3s1 5-3 3M11 5l1 7 3-5 2 5 3-7" stroke="#fff" strokeWidth={2} /><path d="M3 15h20v9H3z" fill="#141414" stroke="none" /><text x="4" y="22" fill="#fff" stroke="none" fontSize="8" fontWeight="bold">2025</text></Svg> },
  { name: 'CAXA 3D 实体设...', icon: <Svg w={24} h={24}><path d="M3 1h14l4 4v18H3z" fill="#cfe6fb" stroke="none" /><path d="M4 8c4-1 8 0 10 4l4 8-5-3-9 3z" fill="#2c7fdc" stroke="none" /><circle cx="11" cy="13" r="3.5" fill="#8cc5fa" stroke="#145cb8" /></Svg> },
  { name: 'CAXA CAD 电子图...', icon: <CaxaLogo size={24} /> },
  { name: '傲软录屏', icon: <Svg w={24} h={24}><circle cx="11" cy="12" r="7" stroke="#8b1a20" strokeDasharray="2 1" /><circle cx="11" cy="12" r="5" fill="#f0262f" stroke="none" /><path d="M18 10c1-2 2-3 3-3M18 14c1 2 2 3 3 3" stroke="#c02028" /></Svg> },
];

const trayIcons = [
  <Svg key="rec"><circle cx="7" cy="8" r="5" fill="#38c6e0" stroke="#1a6f8c" strokeWidth={2} /><path d="M13 4l2-2M14 11l2 2" stroke="#38c6e0" /></Svg>,
  <Svg key="nv"><path d="M1 3h14v10H1z" fill="#6fae0a" stroke="none" /><path d="M3 8c3-4 7-4 10 0-3 4-7 3-10 0z" stroke="#1d3303" strokeWidth={1.5} /><circle cx="8" cy="8" r="1.5" fill="#1d3303" stroke="none" /></Svg>,
  <Svg key="sec"><path d="M2 2l7-2 5 3v8l-6 4-6-5z" fill="#d3232b" stroke="none" /><path d="M3 5l4 1M3 8l3 1" stroke="#fff" strokeWidth={1.5} /><path d="M8 7h6v3c0 3-1 4-3 5-2-1-3-2-3-5z" fill="#f2a51e" stroke="#fff" /></Svg>,
  <Svg key="dish"><path d="M2 1c-1 7 3 11 10 10z" fill="#d8d8d8" stroke="#333" /><path d="M7 6l4-3M8 11l-3 4h9l-3-4" stroke="#ddd" strokeWidth={1.5} /></Svg>,
  <Svg key="360"><circle cx="8" cy="8" r="7" fill="#f6d718" stroke="#4c9a1b" /><path d="M8 4v8M4 8h8" stroke="#2f7d14" strokeWidth={2.2} /></Svg>,
  <Svg key="mic"><path d="M5 0h6v10H5z" fill="#fff" stroke="none" /><path d="M3 12h10M8 12v4M5 15h6" stroke="#fff" strokeWidth={1.5} /></Svg>,
  <Svg key="net"><path d="M3.5 2.5h12v8h-12zM7 14.5h7M9.5 11v3M.5 2.5h4v4h-4zM2.5 7v7" stroke="#fff" /></Svg>,
  <Svg key="vol"><path d="M.5 6h3l4-4v12l-4-4h-3z" stroke="#fff" /><path d="M9.5 6c1 1 1 3 0 4M11.5 4c2 2 2 6 0 8M13.5 2c3 3 3 9 0 12" stroke="#fff" /></Svg>,
];

function Taskbar() {
  return (
    <div className="flex h-10 items-center bg-[#1d2938] text-[#f0f0f0]">
      <button aria-label="开始" className="flex w-12 justify-center">
        <Svg><path d="M0 2.5l7-1v6H0zM8 1.3L16 0v7.5H8zM0 8.5h7v6l-7-1zM8 8.5h8V16l-8-1.3z" fill="#fff" stroke="none" /></Svg>
      </button>
      <button aria-label="Edge" className="ml-[15px] flex w-6 justify-center">
        <Svg w={24} h={24}>
          <circle cx="12" cy="12" r="12" fill="#1783d3" stroke="none" />
          <path d="M0 11C1 4 6 0 12 0c8 0 12 6 12 10 0 5-4 6-8 6-2 0-3-1-2-3 1-4-4-6-8-4-3 1-5 3-6 2z" fill="#3fcf9a" stroke="none" />
          <path d="M0 11C2 5 7 2 12 3c-5 0-9 3-12 8z" fill="#2bb7dc" stroke="none" />
          <path d="M9 11c-3 6 1 12 8 12-6 3-17 0-17-11 2-5 8-4 9-1z" fill="#1565b8" stroke="none" />
          <path d="M10 12c0 5 5 8 12 6l-3 3c-6 2-12-2-9-9z" fill="#0e3e7d" stroke="none" />
        </Svg>
      </button>
      <button className="ml-[17px] flex h-full w-[152px] items-center gap-1.5 border-b-2 border-[#76b9ed] pt-0.5 pl-1.5 whitespace-nowrap">
        <Svg w={24} h={24}><circle cx="12" cy="12" r="11" fill="#2f6df2" stroke="#f1f1f1" strokeWidth={2} /><circle cx="12" cy="12" r="5" fill="#fff" stroke="none" /><path d="M12 12h5l-2 4z" fill="#2f6df2" stroke="none" /></Svg>
        【新提醒】打剖面...
      </button>
      <div className="ml-1 flex">
        {pinned.map((app) => (
          <button key={app.name} aria-label={app.name} className="flex w-[49px] justify-center">{app.icon}</button>
        ))}
      </div>
      <div className="ml-[5px] flex h-full gap-[9px]">
        {running.map((app) => (
          <button key={app.name} className="flex h-full w-[152px] items-center gap-1 border-b-2 border-[#76b9ed] pt-0.5 pl-1.5 whitespace-nowrap">
            {app.icon}
            {app.name}
          </button>
        ))}
      </div>
      <div className="ml-auto flex h-full items-center">
        <span className="text-[#c9ccd2]">语音计算器v5.44</span>
        <button className="mb-5 ml-2 text-base leading-5">»</button>
        <div className="ml-3 flex gap-2">{trayIcons}</div>
        <button className="ml-2 text-sm">英</button>
        <Svg w={42} h={22}><rect x="13" y="3" width="15" height="15" rx="2" fill="#f4481e" stroke="none" /><path d="M25 6c-4-1-8 0-7 2 1 3 7 1 7 4 0 3-5 3-8 2" stroke="#fff" strokeWidth={2} /></Svg>
        <span className="flex h-[22px] w-[22px] items-center justify-center rounded-full bg-[#0fc26a] text-white">38</span>
        <time className="mr-3 ml-4 text-center leading-[19px]">1:57:53<br />2025/7/3</time>
        <span className="h-full w-1 border-l border-[#566070]" />
      </div>
    </div>
  );
}

/* ---------- floating toolbars ---------- */

function ImeBar() {
  return (
    <div className="absolute top-[606px] right-[94px] flex h-[30px] w-[253px] items-center rounded bg-[#fdfdfd] text-black">
      <button aria-label="输入法" className="flex w-9 justify-center"><Svg w={18} h={18}><path d="M17 3C11 1 2 2 2 6c0 4 14 2 14 6 0 4-9 4-14 2" stroke="#f26a12" strokeWidth={3.5} /></Svg></button>
      <span className="h-[18px] w-px bg-[#ccc]" />
      <button className="w-9 text-[15px] font-bold">英</button>
      <button aria-label="标点" className="flex w-[22px] justify-center"><Svg w={12} h={16}><circle cx="3" cy="4" r="2.5" fill="#111" stroke="none" /><path d="M6 10a2.5 2.5 0 115 1c0 2-1 3-3 4l1-3c-2 0-3-1-3-2z" fill="#111" stroke="none" /></Svg></button>
      <button aria-label="语音" className="flex w-[34px] justify-center"><Svg w={16} h={18}><rect x="4.5" y="1" width="7" height="11" rx="3.5" stroke="#222" strokeWidth={1.5} /><path d="M1.5 8c0 9 13 9 13 0M8 15v3" stroke="#222" strokeWidth={1.5} /></Svg></button>
      <button aria-label="键盘" className="flex w-7 justify-center"><Svg w={18} h={18}><rect x="1" y="2" width="16" height="14" rx="1" stroke="#222" strokeWidth={1.5} /><path d="M4 6.500h10M4 9.5h10" stroke="#222" strokeDasharray="2 2" /><path d="M6 12.5h6" stroke="#222" /></Svg></button>
      <button aria-label="皮肤" className="flex w-[38px] justify-center">
        <Svg w={20} h={20}>
          <defs>
            <linearGradient id="skin" x1="0" y1="0" x2="0" y2="1">
              <stop offset="0" stopColor="#e2568b" />
              <stop offset="1" stopColor="#62a8ff" />
            </linearGradient>
          </defs>
          <path d="M6 5c2 2 4 2 6 0l5 2-1 5h-2v6H4v-6H2L1 7z" fill="url(#skin)" stroke="none" />
          <circle cx="17" cy="3" r="3" fill="#f4511e" stroke="none" />
        </Svg>
      </button>
      <button aria-label="工具箱" className="flex w-6 justify-center"><Svg w={16} h={16}><path d="M1 1h5v5H1zM1 10h5v5H1zM10 10h5v5h-5z" stroke="#222" strokeWidth={1.5} /><circle cx="12.5" cy="3.5" r="2.5" stroke="#222" strokeWidth={1.5} /></Svg></button>
      <button aria-label="表情" className="flex flex-1 justify-center"><Svg w={20} h={20}><circle cx="9" cy="10" r="9" stroke="#dedede" /><path d="M1 8c5-3 9-3 13-2l-1 4-5-1-5 3z" fill="#d9712a" stroke="none" /><path d="M3 9l3 1" stroke="#42200b" strokeWidth={2} /><path d="M10 14l2-2" /><path d="M17 3v6M14.5 6h5" stroke="#f7b733" strokeWidth={1.5} /></Svg></button>
    </div>
  );
}

const recorder = [
  { name: '麦克风', icon: <Svg w={20} h={20}><rect x="6" y="1" width="8" height="12" rx="4" fill="#fff" stroke="none" /><path d="M4 8c0 9 12 9 12 0M10 15v3M6 18.5h8" stroke="#ddd" strokeWidth={1.3} /><path d="M6 7.5h8" stroke="#666" /></Svg> },
  { name: '扬声器', icon: <Svg w={20} h={20}><path d="M1 7h4l7-5v16l-7-5H1z" fill="#fff" stroke="none" /><path d="M14 7c2 2 2 4 0 6M16.5 5c3 3 3 7 0 10" stroke="#ccc" strokeWidth={1.3} /></Svg> },
  { name: '摄像头', icon: <Svg w={20} h={20}><circle cx="10" cy="9" r="6.5" stroke="#ddd" strokeWidth={2} /><circle cx="10" cy="9" r="2.5" stroke="#ddd" strokeWidth={1.5} /><path d="M5 18h10M1 1l18 18" stroke="#ccc" strokeWidth={1.5} /></Svg> },
  { name: '画笔', icon: <Svg w={20} h={20}><path d="M16 1l2 2-9 12-4 1 1-4z" fill="#fff" stroke="none" /><path d="M1 18l5-4M9 17.5h10M13 14.5h5" stroke="#bbb" /></Svg> },
  { name: '截图', icon: <Svg w={20} h={20}><path d="M1 4h4l2-2h6l2 2h4v12H1z" fill="#fff" stroke="none" /><circle cx="10" cy="10" r="3.5" stroke="#222" strokeWidth={1.8} /><path d="M2 18.5h16" stroke="#8a8a70" /></Svg> },
  { name: '定时', icon: <Svg w={20} h={20}><circle cx="10" cy="10" r="7" fill="#fff" stroke="none" /><path d="M10 6v5l3 2" stroke="#222" strokeWidth={1.5} /><path d="M2 6l4-4M18 6l-4-4M5 16l-2 2M15 16l2 2" stroke="#bbb" strokeWidth={1.6} /></Svg> },
  { name: '聚焦', icon: <Svg w={20} h={20}><circle cx="10" cy="10" r="5.5" stroke="#fff" strokeWidth={1.8} /><path d="M1.5 5V1.5H5M15 1.5h3.5V5M18.5 15v3.5H15M5 18.5H1.5V15" stroke="#999" strokeWidth={1.5} /></Svg> },
  { name: '收起', icon: <Svg w={20} h={20}><path d="M1 7h6V2M19 7h-6V2M1 13h6v5M19 13h-6v5" stroke="#fff" strokeWidth={2} /></Svg> },
];

function RecorderBar() {
  return (
    <div className="absolute right-px bottom-[92px] flex h-[46px] w-[413px] items-center rounded-lg bg-[#1e1e1f] pl-2.5">
      <button aria-label="暂停" className="flex w-9 justify-center"><Svg w={14} h={16}><path d="M2 2v12M12 2v12" stroke="#fff" strokeWidth={4} strokeLinecap="round" /></Svg></button>
      <button aria-label="停止" className="flex w-9 justify-center"><span className="h-4 w-4 rounded-sm bg-[#fb4034]" /></button>
      <span className="mr-1 ml-2.5 h-[30px] w-px bg-black" />
      {recorder.map((item) => (
        <button key={item.name} aria-label={item.name} className="flex w-[38px] justify-center">{item.icon}</button>
      ))}
    </div>
  );
}

export default function App() {
  return (
    <div className="relative flex h-screen flex-col overflow-hidden bg-[#adadad] font-['Open_Sans','Noto_Sans_CJK_SC',sans-serif] text-xs text-[#222]">
      <TitleBar />
      <MenuBar />
      <Ribbon />
      <DocTabs />
      <main className="flex min-h-0 flex-1">
        <SideTabs />
        <Drawing />
      </main>
      <ModelTabs />
      <div className="flex h-[26px]">
        <div className="flex w-9 flex-col justify-center gap-[3px] bg-[#bababa] pl-1">
          {[0, 1, 2, 3].map((i) => (
            <span key={i} className="h-0.5 w-0.5 bg-[#222]" />
          ))}
        </div>
      </div>
      <StatusBar />
      <Taskbar />
      <ImeBar />
      <RecorderBar />
    </div>
  );
}
